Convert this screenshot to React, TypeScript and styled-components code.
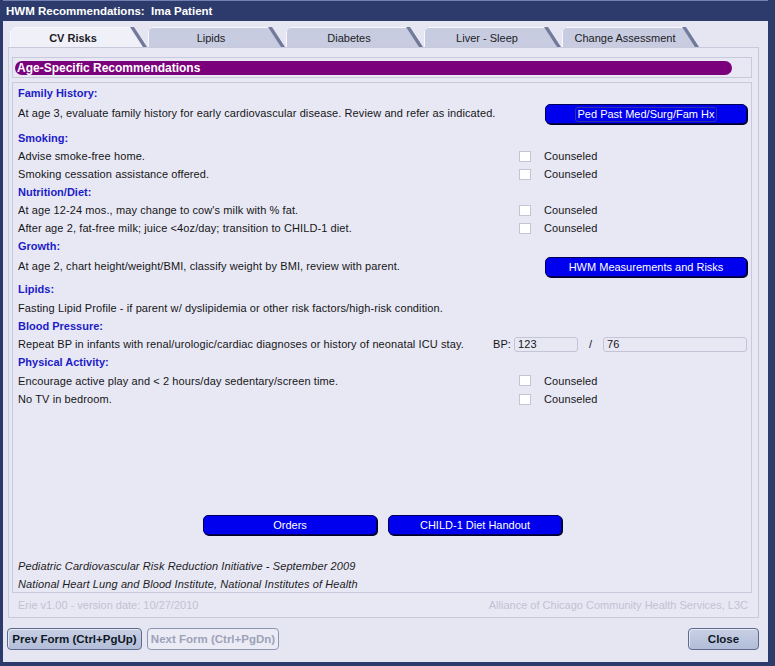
import React from 'react';
import styled, { createGlobalStyle } from 'styled-components';

const GlobalStyle = createGlobalStyle`
  html, body {
    margin: 0;
    padding: 0;
    background: #e6e6f3;
  }
  * {
    box-sizing: border-box;
  }
`;

const Window = styled.div`
  width: 775px;
  height: 666px;
  display: flex;
  flex-direction: column;
  background: #e6e6f3;
  border-left: 3px solid #2d3b6c;
  border-right: 7px solid #2d3b6c;
  border-bottom: 4px solid #2d3b6c;
  font-family: "Liberation Sans", Arial, sans-serif;
  color: #161616;
  overflow: hidden;
`;

const TitleBar = styled.div`
  height: 21px;
  flex-shrink: 0;
  display: flex;
  align-items: center;
  padding-left: 3px;
  background: #2d3b6c;
  border-top: 1px solid #7080b0;
  color: #ffffff;
  font-size: 11.5px;
  font-weight: bold;
  white-space: pre;
`;

const Body = styled.div`
  flex: 1;
  display: flex;
  flex-direction: column;
  padding: 6px 9px 0 5px;
`;

const TabStrip = styled.div`
  display: flex;
  height: 20px;
  margin-left: 2px;
  gap: 1px;
`;

const Tab = styled.div`
  width: 137px;
  height: 20px;
  background: linear-gradient(to right, #9ea5c4, #6f7799);
  border-top-left-radius: 5px;
  clip-path: polygon(0 0, calc(100% - 13px) 0, 100% 100%, 0 100%);
`;

const TabFace = styled.div<{ $active?: boolean }>`
  height: 100%;
  display: flex;
  align-items: center;
  justify-content: center;
  padding-right: 12px;
  background: ${p => (p.$active ? '#f0f0f9' : '#c7cce0')};
  border-top: 1px solid #f8f8ff;
  border-left: 1px solid #f8f8ff;
  border-top-left-radius: 5px;
  clip-path: polygon(0 0, calc(100% - 17px) 0, calc(100% - 4px) 100%, 0 100%);
  font-size: 11px;
  font-weight: ${p => (p.$active ? 'bold' : 'normal')};
  color: #1c1c24;
`;

const Panel = styled.div`
  flex: 1;
  display: flex;
  flex-direction: column;
  border: 1px solid #c9c9dc;
  background: #e8e8f5;
  padding: 9px 6px 0 3px;
`;

const HeaderBox = styled.div`
  height: 21px;
  border: 1px solid #c9c9dc;
  padding: 3px 19px 0 2px;
`;

const PurpleBar = styled.div`
  height: 14px;
  background: #7a007c;
  border-radius: 7px;
  color: #ffffff;
  font-size: 12px;
  font-weight: bold;
  line-height: 14px;
  padding-left: 2px;
`;

const ContentBox = styled.div`
  flex: 1;
  margin-top: 4px;
  display: flex;
  flex-direction: column;
  border: 1px solid #c9c9dc;
  padding: 1px 4px 0 5px;
`;

const Heading = styled.div`
  height: 18px;
  line-height: 18px;
  font-size: 11px;
  font-weight: bold;
  color: #1c1cc8;
`;

const Row = styled.div<{ $h?: number; $top?: boolean }>`
  height: ${p => p.$h ?? 18}px;
  display: flex;
  align-items: ${p => (p.$top ? 'flex-start' : 'center')};
  padding-top: ${p => (p.$top ? '1px' : '0')};
  font-size: 11px;
  letter-spacing: 0.1px;
`;

const RowText = styled.div`
  flex: 1;
  line-height: 20px;
  white-space: nowrap;
`;

const CheckGroup = styled.div`
  width: 228px;
  display: flex;
  align-items: center;
  gap: 13px;
`;

const CheckBox = styled.span`
  width: 12px;
  height: 11px;
  background: #ffffff;
  border: 1px solid #c4c4d4;
`;

const BlueButton = styled.button<{ $width?: number }>`
  width: ${p => p.$width ?? 202}px;
  height: 20px;
  margin-top: 1px;
  padding: 0;
  background: #0000ee;
  border: 1px solid #000058;
  border-radius: 5px;
  box-shadow: 1px 1px 0 #00002a;
  color: #ffffff;
  font-family: "Liberation Sans", Arial, sans-serif;
  font-size: 11px;
  display: flex;
  align-items: center;
  justify-content: center;
`;

const FocusLabel = styled.span`
  border: 1px solid #3232a8;
  border-radius: 3px;
  padding: 0 2px;
  line-height: 13px;
`;

const BpGroup = styled.div`
  width: 254px;
  display: flex;
  align-items: center;
`;

const BpLabel = styled.span`
  width: 21px;
`;

const BpInput = styled.div<{ $width: number }>`
  width: ${p => p.$width}px;
  height: 15px;
  border: 1px solid #c4c4d6;
  border-radius: 3px;
  padding-left: 3px;
  line-height: 13px;
  font-size: 11px;
`;

const Slash = styled.span`
  width: 25px;
  text-align: center;
`;

const Spacer = styled.div`
  flex: 1;
`;

const ActionBar = styled.div`
  display: flex;
  justify-content: center;
  gap: 11px;
  margin-bottom: 21px;
`;

const Footnote = styled.div`
  height: 18px;
  line-height: 20px;
  font-size: 11px;
  font-style: italic;
  letter-spacing: 0.1px;
  color: #1c1c24;
`;

const Credits = styled.div`
  height: 24px;
  display: flex;
  align-items: center;
  justify-content: space-between;
  padding: 0 4px 0 6px;
  font-size: 11px;
  color: #c2c2d2;
`;

const BottomBar = styled.div`
  height: 44px;
  display: flex;
  align-items: flex-start;
  justify-content: space-between;
  padding-top: 10px;
  margin-left: -1px;
`;

const NavGroup = styled.div`
  display: flex;
  gap: 5px;
`;

const FormButton = styled.button<{ $disabled?: boolean; $width: number }>`
  width: ${p => p.$width}px;
  height: 22px;
  padding: 0;
  border: 1px solid ${p => (p.$disabled ? '#8d96b4' : '#5d6a8e')};
  border-radius: 4px;
  background: ${p =>
    p.$disabled ? '#ebebf5' : 'linear-gradient(#c8d0e4, #b2bdd8)'};
  box-shadow: ${p => (p.$disabled ? 'none' : 'inset 1px 1px 0 #e4e8f4')};
  color: ${p => (p.$disabled ? '#9ea2b8' : '#101826')};
  font-family: "Liberation Sans", Arial, sans-serif;
  font-size: 11.5px;
  font-weight: bold;
`;

const tabs = ['CV Risks', 'Lipids', 'Diabetes', 'Liver - Sleep', 'Change Assessment'];

const Counseled = () => (
  <CheckGroup>
    <CheckBox />
    <span>Counseled</span>
  </CheckGroup>
);

export default function App() {
  return (
    <>
      <GlobalStyle />
      <Window>
        <TitleBar>HWM Recommendations:  Ima Patient</TitleBar>
        <Body>
          <TabStrip>
            {tabs.map((t, i) => (
              <Tab key={t}>
                <TabFace $active={i === 0}>{t}</TabFace>
              </Tab>
            ))}
          </TabStrip>
          <Panel>
            <HeaderBox>
              <PurpleBar>Age-Specific Recommendations</PurpleBar>
            </HeaderBox>
            <ContentBox>
              <Heading>Family History:</Heading>
              <Row $h={27} $top>
                <RowText>At age 3, evaluate family history for early cardiovascular disease. Review and refer as indicated.</RowText>
                <BlueButton>
                  <FocusLabel>Ped Past Med/Surg/Fam Hx</FocusLabel>
                </BlueButton>
              </Row>
              <Heading>Smoking:</Heading>
              <Row>
                <RowText>Advise smoke-free home.</RowText>
                <Counseled />
              </Row>
              <Row>
                <RowText>Smoking cessation assistance offered.</RowText>
                <Counseled />
              </Row>
              <Heading>Nutrition/Diet:</Heading>
              <Row>
                <RowText>At age 12-24 mos., may change to cow's milk with % fat.</RowText>
                <Counseled />
              </Row>
              <Row>
                <RowText>After age 2, fat-free milk; juice &lt;4oz/day; transition to CHILD-1 diet.</RowText>
                <Counseled />
              </Row>
              <Heading>Growth:</Heading>
              <Row $h={25} $top>
                <RowText>At age 2, chart height/weight/BMI, classify weight by BMI, review with parent.</RowText>
                <BlueButton>HWM Measurements and Risks</BlueButton>
              </Row>
              <Heading>Lipids:</Heading>
              <Row $h={19}>
                <RowText>Fasting Lipid Profile - if parent w/ dyslipidemia or other risk factors/high-risk condition.</RowText>
              </Row>
              <Heading>Blood Pressure:</Heading>
              <Row>
                <RowText>Repeat BP in infants with renal/urologic/cardiac diagnoses or history of neonatal ICU stay.</RowText>
                <BpGroup>
                  <BpLabel>BP:</BpLabel>
                  <BpInput $width={64}>123</BpInput>
                  <Slash>/</Slash>
                  <BpInput $width={144}>76</BpInput>
                </BpGroup>
              </Row>
              <Heading>Physical Activity:</Heading>
              <Row $h={19}>
                <RowText>Encourage active play and &lt; 2 hours/day sedentary/screen time.</RowText>
                <Counseled />
              </Row>
              <Row>
                <RowText>No TV in bedroom.</RowText>
                <Counseled />
              </Row>
              <Spacer />
              <ActionBar>
                <BlueButton $width={174}>Orders</BlueButton>
                <BlueButton $width={174}>CHILD-1 Diet Handout</BlueButton>
              </ActionBar>
              <Footnote>Pediatric Cardiovascular Risk Reduction Initiative - September 2009</Footnote>
              <Footnote>National Heart Lung and Blood Institute, National Institutes of Health</Footnote>
            </ContentBox>
            <Credits>
              <span>Erie v1.00 - version date: 10/27/2010</span>
              <span>Alliance of Chicago Community Health Services, L3C</span>
            </Credits>
          </Panel>
          <BottomBar>
            <NavGroup>
              <FormButton $width={135}>Prev Form (Ctrl+PgUp)</FormButton>
              <FormButton $width={132} $disabled>Next Form (Ctrl+PgDn)</FormButton>
            </NavGroup>
            <FormButton $width={71}>Close</FormButton>
          </BottomBar>
        </Body>
      </Window>
    </>
  );
}
